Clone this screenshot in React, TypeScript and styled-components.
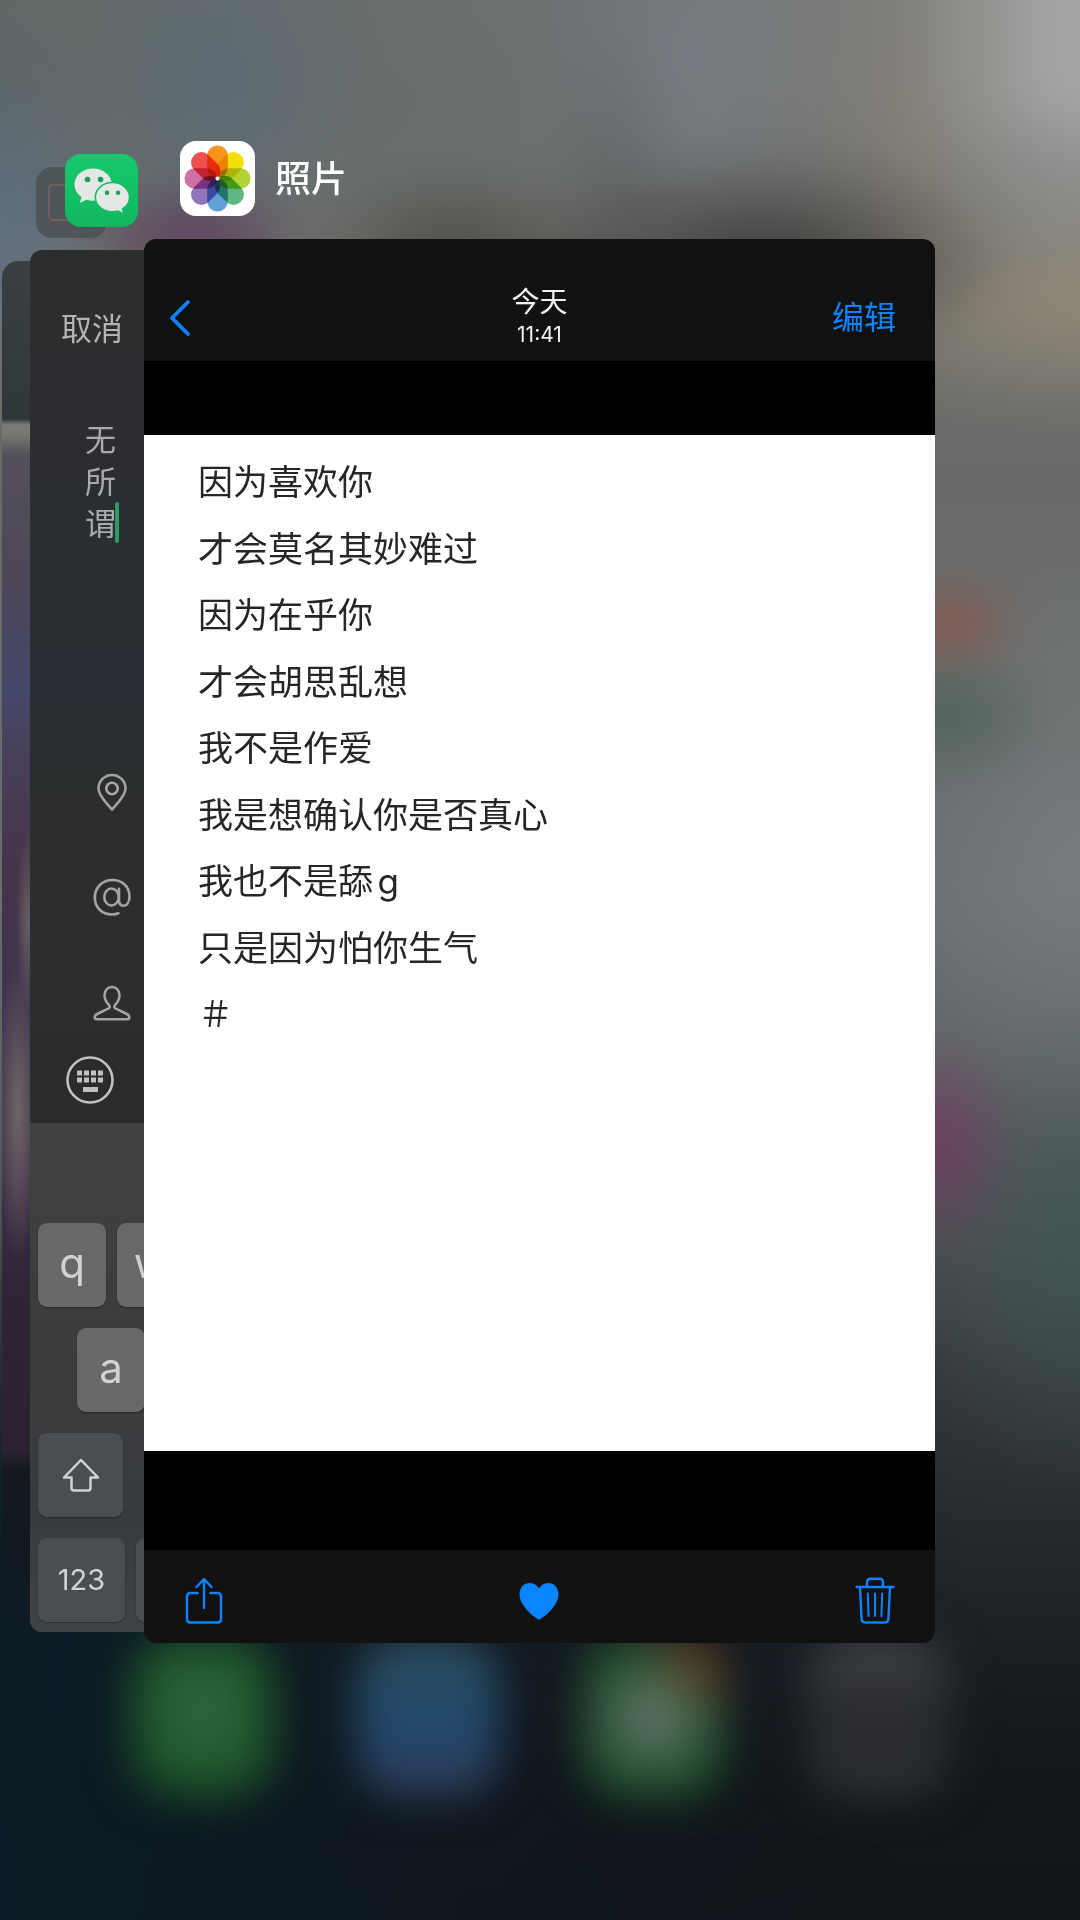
import React from "react";
import styled, { createGlobalStyle, css } from "styled-components";

const BLUE = "#0a84ff";
const SANS = `Inter, "Noto Sans CJK SC", sans-serif`;

const GlobalStyle = createGlobalStyle`
  *, *::before, *::after { box-sizing: border-box; }
  body { margin: 0; background: #14181c; font-family: ${SANS}; }
  button { appearance: none; border: 0; padding: 0; margin: 0; background: none; color: inherit; font: inherit; cursor: pointer; }
  svg { display: block; }
`;

const Screen = styled.main`
  position: relative;
  min-height: 100vh;
  overflow: hidden;
`;

/* ---------- blurred home screen ---------- */

const Backdrop = styled.div`
  position: absolute;
  inset: 0;
  display: flex;
  flex-direction: column;
  justify-content: flex-end;
  padding: 0 90px 122px;
  overflow: hidden;
`;

const Wallpaper = styled.div`
  position: absolute;
  inset: -60px;
  filter: blur(20px);
  background:
    radial-gradient(ellipse 80px 50px at 84% 33.5%, rgba(150, 72, 62, 0.7), transparent),
    radial-gradient(ellipse 110px 70px at 84% 38%, rgba(72, 94, 86, 0.8), transparent),
    radial-gradient(ellipse 80px 110px at 83% 59%, rgba(122, 50, 98, 0.75), transparent),
    radial-gradient(ellipse 120px 60px at 21% 14.5%, rgba(92, 50, 90, 0.9), transparent),
    radial-gradient(ellipse 250px 110px at 69% 15.5%, rgba(58, 56, 54, 0.95), transparent),
    radial-gradient(ellipse 150px 80px at 43% 15%, rgba(66, 66, 54, 0.75), transparent),
    radial-gradient(ellipse 70px 160px at 56% 12%, rgba(84, 85, 84, 0.4), transparent),
    radial-gradient(ellipse 120px 200px at 5% 13%, rgba(92, 114, 146, 0.75), transparent),
    radial-gradient(ellipse 140px 160px at 23% 7%, rgba(90, 112, 136, 0.7), transparent),
    radial-gradient(ellipse 160px 240px at 62% 6%, rgba(124, 129, 140, 0.7), transparent),
    radial-gradient(ellipse 110px 260px at 81% 9%, rgba(140, 124, 106, 0.5), transparent),
    radial-gradient(ellipse 260px 130px at 95% 17.5%, rgba(156, 144, 126, 0.8), transparent),
    radial-gradient(ellipse 200px 300px at 95% 45%, rgba(128, 133, 136, 0.6), transparent),
    radial-gradient(ellipse 160px 260px at 95% 64%, rgba(64, 88, 88, 0.7), transparent),
    radial-gradient(ellipse 160px 300px at 5% 95%, rgba(18, 50, 48, 0.8), transparent),
    linear-gradient(180deg, #6f7374 0%, #6d706f 12%, #70706a 19%, #686a69 26%, #6a6e6c 35%, #676b6c 41%, #6b6f71 47%, #5d6163 56%, #4a4f51 64%, #35393d 71%, #26292d 78%, #1b1e22 84%, #14171a 90%, #101317 100%);

  &::before,
  &::after {
    content: "";
    position: absolute;
    left: 0;
    right: 0;
  }

  &::before {
    top: 0;
    height: 340px;
    background: linear-gradient(90deg, rgba(84, 96, 94, 0.6), rgba(108, 110, 110, 0.1) 60%, rgba(138, 136, 132, 0.5) 80%, rgba(168, 168, 166, 0.95) 93%);
    mask-image: linear-gradient(#000 45%, transparent);
  }

  &::after {
    bottom: 0;
    height: 760px;
    background: linear-gradient(90deg, rgba(10, 28, 38, 0.95), rgba(14, 22, 32, 0.6) 50%, transparent 85%);
    mask-image: linear-gradient(transparent, #000 45%);
  }
`;

const Dock = styled.div`
  position: relative;
  display: grid;
  grid-template-columns: repeat(4, 1fr);
  justify-items: center;
  filter: blur(22px);
`;

const DockIcon = styled.div<{ $fill: string }>`
  width: 142px;
  height: 162px;
  border-radius: 44px;
  background: ${(p) => p.$fill};
`;

const DOCK_FILLS = [
  "radial-gradient(circle at 50% 45%, #2f6a3e, #1e562b 60%, #14421f)",
  "linear-gradient(180deg, #2f4c5a, #224c6c 45%, #27446c 70%, #303a4c)",
  "radial-gradient(circle at 100% 0, #8a3318, transparent 40%), radial-gradient(circle at 50% 50%, #75827a, #3e6049 35%, #1b4d26 75%)",
  "linear-gradient(180deg, #45474b, #292b2f 45%, #2d2f34)",
];

/* ---------- card deck ---------- */

const Deck = styled.div`
  position: relative;
  display: grid;
  grid-template-columns: 2px 28px 114px minmax(0, 791fr) minmax(0, 145fr);
  align-items: start;
  padding-top: 141px;
`;

const RunningApp = styled.section<{ $from: number; $drop: number }>`
  grid-row: 1;
  grid-column: ${(p) => p.$from} / 5;
  padding-top: ${(p) => p.$drop}px;
`;

const AppLabel = styled.header<{ $indent: number }>`
  display: flex;
  align-items: center;
  gap: 20px;
  padding-left: ${(p) => p.$indent}px;
  margin-bottom: 23px;
  color: #fff;
  font-size: 36px;
  line-height: 48px;
  font-weight: 500;
`;

const AppIcon = styled.div<{ $size: number; $bg: string }>`
  width: ${(p) => p.$size}px;
  height: ${(p) => p.$size}px;
  border-radius: 16px;
  overflow: hidden;
  background: ${(p) => p.$bg};
`;

const cardShape = css`
  border-radius: 12px;
  overflow: hidden;
`;

const FarCard = styled.div`
  ${cardShape}
  height: 1362px;
  border-radius: 16px;
  background:
    radial-gradient(ellipse 12px 90px at 26px 660px, rgba(112, 104, 104, 0.8), transparent),
    radial-gradient(ellipse 22px 150px at 16px 850px, rgba(112, 104, 104, 0.95), transparent),
    linear-gradient(180deg, #3a4043 0, #30373b 158px, #7b7d77 164px, #77786f 174px, #54505a 194px, #4d4758 320px, #45486a 430px, #48405a 490px, #463448 620px, #40354e 720px, #3f3048 900px, #2f2436 1040px, #2b2132 1190px, #14191e 1210px, #0e1a24 100%);
`;

/* ---------- post composer card ---------- */

const Composer = styled.div`
  ${cardShape}
  color: #b4b5b6;
  background: linear-gradient(180deg, #2c2e2e 0, #2b2d31 200px, #2b2e34 450px, #2c2e2d 560px, #2b2d2c 100%);
`;

const ComposerNav = styled.div`
  display: flex;
  align-items: center;
  height: 158px;
  padding-left: 31px;
  font-size: 31px;
  line-height: 42px;
`;

const DraftField = styled.div`
  position: relative;
  padding: 11px 0 0 55px;
`;

const DraftText = styled.textarea`
  display: block;
  width: 44px;
  height: 126px;
  padding: 0;
  border: 0;
  outline: 0;
  resize: none;
  overflow: hidden;
  background: transparent;
  color: #a9abae;
  font: 31px/42px ${SANS};
`;

const Caret = styled.span`
  position: absolute;
  left: 85px;
  bottom: 2px;
  width: 4px;
  height: 41px;
  border-radius: 2px;
  background: #2a9c69;
`;

const Options = styled.div`
  display: flex;
  flex-direction: column;
  gap: 67px;
  padding: 228px 0 16px 63px;
  color: #a3a5a4;
`;

const OptionButton = styled.button`
  width: 38px;
  height: 38px;
`;

const ComposerBar = styled.div`
  display: flex;
  align-items: center;
  height: 86px;
  padding-left: 35px;
  color: #c0c1c1;
  background: #2a2c2c;
`;

const Keyboard = styled.div`
  display: flex;
  flex-direction: column;
  gap: 21px;
  padding: 100px 8px 10px;
  background: linear-gradient(180deg, #404242, #3b3c3d 50%, #383b3f 80%, #414447);
`;

const KeyRow = styled.div<{ $indent?: number }>`
  display: flex;
  gap: 11px;
  padding-left: ${(p) => p.$indent ?? 0}px;
`;

const Key = styled.button<{ $width: number; $dark?: boolean }>`
  display: flex;
  align-items: center;
  justify-content: center;
  flex: none;
  width: ${(p) => p.$width}px;
  height: 84px;
  border-radius: 9px;
  box-shadow: 0 1px 2px rgba(0, 0, 0, 0.35);
  background: ${(p) => (p.$dark ? "#4b4e51" : "#676868")};
  color: #d0d2d4;
  font-size: ${(p) => (p.$dark ? 29 : 42)}px;
  line-height: 48px;
  padding-bottom: ${(p) => (p.$dark ? 0 : 4)}px;
`;

/* ---------- photo viewer card ---------- */

const Viewer = styled.div`
  ${cardShape}
  position: relative;
  background: #111;
`;

const ViewerNav = styled.div`
  display: grid;
  grid-template-columns: 1fr auto 1fr;
  align-items: center;
  height: 122px;
  padding: 36px 39px 0 24px;
  color: ${BLUE};
  font-size: 32px;
`;

const BackButton = styled.button`
  justify-self: start;
`;

const EditButton = styled.button`
  justify-self: end;
  line-height: 40px;
`;

const Stamp = styled.div`
  /* evens out the different side paddings so the title stays centred */
  padding-left: 15px;
  text-align: center;
  color: #f2f2f2;
  font-size: 28px;
  line-height: 34px;
`;

const Time = styled.time`
  display: block;
  font-size: 21px;
  line-height: 32px;
`;

const Stage = styled.div`
  padding: 74px 0 99px;
  background: #000;
`;

const Photo = styled.div`
  aspect-ratio: 791 / 1016;
  padding: 23px 54px;
  background: #fff;
`;

const Poem = styled.div`
  display: grid;
  align-content: space-between;
  min-height: 580px;
  color: #262626;
  font-size: 35px;
  line-height: 48px;
  text-autospace: normal;
`;

const Verse = styled.p`
  margin: 0;
`;

const Toolbar = styled.div`
  display: flex;
  align-items: center;
  justify-content: space-between;
  height: 93px;
  padding: 8px 40px 0 41px;
  color: ${BLUE};
`;

/* ---------- drawings ---------- */

const PETALS = ["#f7941e", "#f4df0a", "#b4d335", "#5fb883", "#62a0d8", "#9274bd", "#cf70a6", "#ee5050"];

const PhotosLogo = () => (
  <svg viewBox="0 0 75 75" width="75" height="75" aria-hidden="true">
    {PETALS.map((fill, i) => (
      <rect
        key={fill}
        x="27.2"
        y="4.5"
        width="20.600"
        height="32.500"
        rx="10"
        fill={fill}
        transform={`rotate(${i * 45} 37.5 37.5)`}
        style={{ mixBlendMode: "multiply" }}
      />
    ))}
    <circle cx="37.500" cy="37.500" r="2" fill="#fff" />
  </svg>
);

const WeChatLogo = () => (
  <svg viewBox="0 0 73 73" width="73" height="73" aria-hidden="true">
    <path
      fill="#e4e8e4"
      d="M28 14.500C17.500 14.500 9.500 21.500 9.500 30.500c0 5 2.700 9.500 7 12.500l-1.700 6 6.600-3.300c2 .6 4.300 1 6.600 1 10.500 0 18.800-7.200 18.800-16.200S38.500 14.500 28 14.500z"
    />
    <circle cx="22.500" cy="25.500" r="2.800" fill="#1a9c58" />
    <circle cx="35.500" cy="25.500" r="2.800" fill="#1a9c58" />
    <path
      fill="#e4e8e4"
      stroke="#13bd64"
      strokeWidth="1.600"
      d="M47.500 28.500C38 28.500 30.300 35 30.300 43.300S38 57.800 47.500 57.800c2 0 3.800-.3 5.500-.8l6.200 3-1.600-5.200c4.200-2.600 6.900-6.800 6.900-11.400C64.500 35 57 28.500 47.500 28.500z"
    />
    <circle cx="42" cy="38.800" r="2.200" fill="#1a9c58" />
    <circle cx="53" cy="38.800" r="2.200" fill="#1a9c58" />
  </svg>
);

const FaintLogo = () => (
  <svg viewBox="0 0 71 71" width="71" height="71" aria-hidden="true">
    <rect x="13" y="18" width="44" height="35" rx="4" fill="none" stroke="#84605c" strokeWidth="1.500" />
  </svg>
);

const line = { fill: "none", stroke: "currentColor", strokeLinecap: "round", strokeLinejoin: "round" } as const;

const PinIcon = () => (
  <svg viewBox="0 0 38 38" width="38" height="38" {...line} strokeWidth="2.600">
    <path d="M19 36.500C15.500 32 5.500 23.500 5.500 15.500a13.500 13.500 0 0 1 27 0C32.500 23.500 22.500 32 19 36.500z" />
    <circle cx="19" cy="15.500" r="5.700" />
  </svg>
);

const AtIcon = () => (
  <svg viewBox="0 0 38 38" width="38" height="38" {...line} strokeWidth="2.600">
    <ellipse cx="18.500" cy="19" rx="7.200" ry="8.500" />
    <path d="M26 10.800V22c0 4 1.500 5.700 4.200 5.700 4 0 6.300-4 6.300-9.500C36.500 8.500 29 2 19.500 2 9.500 2 1.800 9.500 1.800 19.500S9 36.500 19 36.500c2.500 0 4.500-.4 6.500-1.200" />
  </svg>
);

const PersonIcon = () => (
  <svg viewBox="0 0 38 38" width="38" height="38" {...line} strokeWidth="2.500">
    <path d="M19 4c-4.500 0-7.500 3.500-7.500 8 0 4 2 7.500 4.500 10 1.200 1.300.8 2.800-.8 3.600L5 30.500c-2.500 1.200-3.300 2.600-3.300 4 0 1.200.8 1.700 2 1.700h30.600c1.200 0 2-.5 2-1.700 0-1.400-.8-2.800-3.300-4l-10.200-4.900c-1.600-.8-2-2.300-.8-3.600 2.500-2.500 4.500-6 4.500-10 0-4.500-3-8-7.500-8z" />
  </svg>
);

const KeyboardIcon = () => (
  <svg viewBox="0 0 50 50" width="50" height="50" aria-hidden="true">
    <circle cx="25" cy="25" r="22.500" fill="none" stroke="currentColor" strokeWidth="2.600" />
    {[0, 1].map((r) =>
      [0, 1, 2, 3].map((c) => (
        <rect key={`${r}${c}`} x={12 + c * 7} y={15.5 + r * 7} width="5" height="5" fill="currentColor" />
      ))
    )}
    <rect x="18" y="32" width="15" height="5" fill="currentColor" />
  </svg>
);

const ShiftIcon = () => (
  <svg viewBox="0 0 40 36" width="40" height="36" {...line} strokeWidth="2.500">
    <path d="M20 3L3 20.500h7.500V31c0 1.800.8 2.500 2.500 2.500h14c1.700 0 2.500-.7 2.500-2.500V20.500H37z" />
  </svg>
);

const ChevronIcon = () => (
  <svg viewBox="0 0 24 38" width="24" height="38" {...line} strokeWidth="3.800">
    <path d="M20 3L4 19l16 16" />
  </svg>
);

const ShareIcon = () => (
  <svg viewBox="0 0 38 48" width="38" height="48" {...line} strokeWidth="2.400">
    <path d="M12.500 16H5.500C3 16 2 17.200 2 19.500V42c0 2.300 1 3.500 3.500 3.500h27c2.500 0 3.500-1.200 3.500-3.500V19.500c0-2.300-1-3.500-3.500-3.500h-7" />
    <path d="M19 31V2.500M11.500 10L19 2.200 26.500 10" />
  </svg>
);

const HeartIcon = () => (
  <svg viewBox="0 0 40 38" width="40" height="38" aria-hidden="true">
    <path
      fill="currentColor"
      d="M20 37.800C19 37.800.5 25.500.5 12.300.5 5.500 5 1 10.800 1c4.200 0 7.300 2.200 9.200 5.500C21.900 3.200 25 1 29.200 1 35 1 39.500 5.500 39.500 12.300 39.500 25.500 21 37.800 20 37.800z"
    />
  </svg>
);

const TrashIcon = () => (
  <svg viewBox="0 0 40 48" width="40" height="48" {...line} strokeWidth="2.400">
    <path d="M1.500 10H38.500M12 9.500V5.200C12 2.700 13.200 1.700 15.500 1.700h9C26.800 1.700 28 2.700 28 5.200V9.500" />
    <path d="M5 10l1.600 32c.1 2.300 1.400 3.500 3.600 3.500h19.600c2.200 0 3.500-1.200 3.600-3.500L35 10" />
    <path d="M12.800 16.500l.8 22.500M20 16.500V39M27.200 16.500L26.400 39" strokeWidth="2" />
  </svg>
);

/* ---------- screen ---------- */

const VERSES = [
  "因为喜欢你",
  "才会莫名其妙难过",
  "因为在乎你",
  "才会胡思乱想",
  "我不是作爱",
  "我是想确认你是否真心",
  "我也不是舔g",
  "只是因为怕你生气",
  "＃",
];

export default function App() {
  return (
    <Screen>
      <GlobalStyle />
      <Backdrop aria-hidden="true">
        <Wallpaper />
        <Dock>
          {DOCK_FILLS.map((fill) => (
            <DockIcon key={fill} $fill={fill} />
          ))}
        </Dock>
      </Backdrop>

      <Deck>
        <RunningApp $from={2} $drop={26}>
          <AppLabel $indent={34}>
            <AppIcon $size={71} $bg="rgba(72, 78, 80, 0.75)">
              <FaintLogo />
            </AppIcon>
          </AppLabel>
          <FarCard />
        </RunningApp>

        <RunningApp $from={3} $drop={13}>
          <AppLabel $indent={35}>
            <AppIcon $size={73} $bg="linear-gradient(180deg, #17c96c, #10b75f)">
              <WeChatLogo />
            </AppIcon>
          </AppLabel>
          <Composer>
            <ComposerNav>
              <button type="button">取消</button>
            </ComposerNav>
            <DraftField>
              <DraftText aria-label="正文" rows={3} defaultValue={"无\n所\n谓"} />
              <Caret />
            </DraftField>
            <Options>
              <OptionButton type="button" aria-label="所在位置"><PinIcon /></OptionButton>
              <OptionButton type="button" aria-label="提醒谁看"><AtIcon /></OptionButton>
              <OptionButton type="button" aria-label="谁可以看"><PersonIcon /></OptionButton>
            </Options>
            <ComposerBar>
              <button type="button" aria-label="键盘"><KeyboardIcon /></button>
            </ComposerBar>
            <Keyboard>
              <KeyRow>
                <Key type="button" $width={68}>q</Key>
                <Key type="button" $width={68}>w</Key>
              </KeyRow>
              <KeyRow $indent={39}>
                <Key type="button" $width={68}>a</Key>
              </KeyRow>
              <KeyRow>
                <Key type="button" $width={85} $dark aria-label="Shift"><ShiftIcon /></Key>
              </KeyRow>
              <KeyRow>
                <Key type="button" $width={87} $dark>123</Key>
                <Key type="button" $width={87} $dark aria-label="表情" />
              </KeyRow>
            </Keyboard>
          </Composer>
        </RunningApp>

        <RunningApp $from={4} $drop={0}>
          <AppLabel $indent={36}>
            <AppIcon $size={75} $bg="#fff">
              <PhotosLogo />
            </AppIcon>
            照片
          </AppLabel>
          <Viewer>
            <ViewerNav>
              <BackButton type="button" aria-label="返回"><ChevronIcon /></BackButton>
              <Stamp>
                今天
                <Time>11:41</Time>
              </Stamp>
              <EditButton type="button">编辑</EditButton>
            </ViewerNav>
            <Stage>
              <Photo>
                <Poem>
                  {VERSES.map((verse) => (
                    <Verse key={verse}>{verse}</Verse>
                  ))}
                </Poem>
              </Photo>
            </Stage>
            <Toolbar>
              <button type="button" aria-label="共享"><ShareIcon /></button>
              <button type="button" aria-label="个人收藏"><HeartIcon /></button>
              <button type="button" aria-label="删除"><TrashIcon /></button>
            </Toolbar>
          </Viewer>
        </RunningApp>
      </Deck>
    </Screen>
  );
}
